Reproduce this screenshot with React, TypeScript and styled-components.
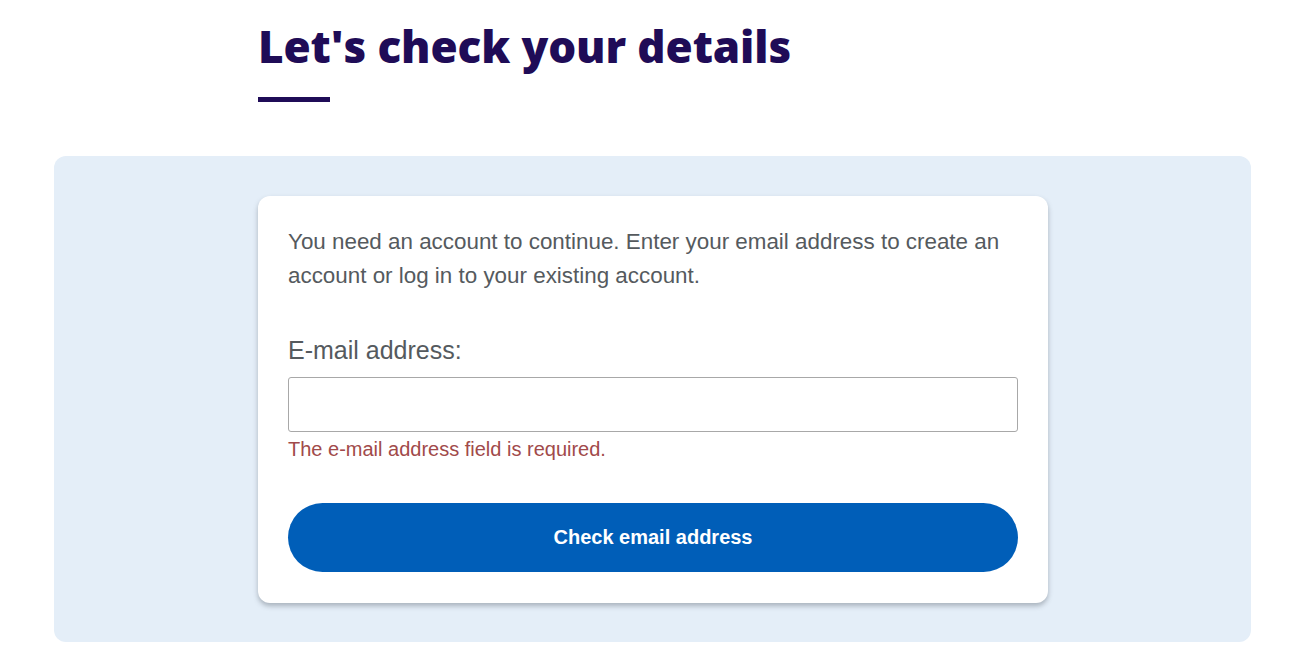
import React from "react";
import styled, { createGlobalStyle } from "styled-components";

const GlobalStyle = createGlobalStyle`
  html, body { margin: 0; padding: 0; background: #ffffff; }
  body { font-family: "Liberation Sans", Arial, sans-serif; }
  * { box-sizing: border-box; }
`;

const Page = styled.div`
  width: 1297px;
  padding: 0 46px 12px 54px;
`;

const Header = styled.header`
  padding: 19px 0 0 204px;
`;

const Title = styled.h1`
  margin: 0;
  font-family: "Open Sans", Lato, sans-serif;
  font-weight: 800;
  font-size: 44px;
  line-height: 54px;
  color: #1f0c57;
  letter-spacing: -0.1px;
`;

const TitleRule = styled.div`
  width: 72px;
  height: 5px;
  background: #1f0c57;
  margin-top: 24px;
`;

const Panel = styled.section`
  margin-top: 54px;
  background: #e4eef8;
  border-radius: 12px;
  padding: 40px 0 39px 204px;
`;

const Card = styled.div`
  width: 790px;
  background: #ffffff;
  border-radius: 12px;
  box-shadow: 0 3px 5px rgba(60, 70, 80, 0.35);
  padding: 29px 30px 31px;
  display: flex;
  flex-direction: column;
`;

const Intro = styled.p`
  margin: 0;
  font-size: 22.4px;
  line-height: 34px;
  color: #555a5e;
`;

const Label = styled.label`
  margin-top: 42px;
  font-size: 25px;
  line-height: 30px;
  color: #555a5e;
`;

const Input = styled.input`
  margin-top: 12px;
  width: 100%;
  height: 55px;
  border: 1px solid #a8a8a8;
  border-radius: 3px;
  font-size: 20px;
  padding: 0 12px;
  outline: none;
`;

const ErrorText = styled.div`
  margin-top: 6px;
  font-size: 20px;
  line-height: 22px;
  color: #a14a4a;
`;

const Button = styled.button`
  margin-top: 43px;
  width: 100%;
  height: 69px;
  border: none;
  border-radius: 35px;
  background: #005eb8;
  color: #ffffff;
  font-family: "Liberation Sans", Arial, sans-serif;
  font-weight: 700;
  font-size: 20px;
  cursor: pointer;
`;

export default function App() {
  return (
    <>
      <GlobalStyle />
      <Page>
        <Header>
          <Title>Let's check your details</Title>
          <TitleRule />
        </Header>
        <Panel>
          <Card>
            <Intro>
              You need an account to continue. Enter your email address to create an account or log in to your existing account.
            </Intro>
            <Label htmlFor="email">E-mail address:</Label>
            <Input id="email" type="email" />
            <ErrorText>The e-mail address field is required.</ErrorText>
            <Button type="button">Check email address</Button>
          </Card>
        </Panel>
      </Page>
    </>
  );
}
